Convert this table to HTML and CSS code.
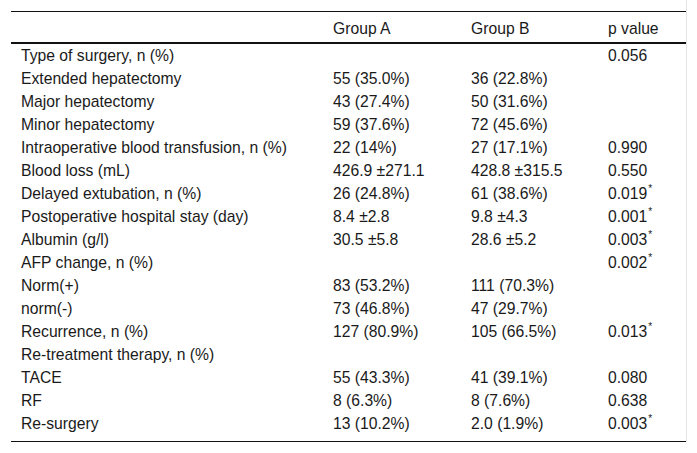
FILE: index.html
```html
<!DOCTYPE html>
<html>
<head>
<meta charset="utf-8">
<link rel="stylesheet" href="styles.css">
</head>
<body>
<div class="wrap">
<table class="data">
<colgroup>
<col class="c-label"><col class="c-a"><col class="c-b"><col class="c-p">
</colgroup>
<thead>
<tr><th></th><th>Group A</th><th>Group B</th><th>p value</th></tr>
</thead>
<tbody>
<tr><td>Type of surgery, n (%)</td><td></td><td></td><td>0.056</td></tr>
<tr><td>Extended hepatectomy</td><td>55 (35.0%)</td><td>36 (22.8%)</td><td></td></tr>
<tr><td>Major hepatectomy</td><td>43 (27.4%)</td><td>50 (31.6%)</td><td></td></tr>
<tr><td>Minor hepatectomy</td><td>59 (37.6%)</td><td>72 (45.6%)</td><td></td></tr>
<tr><td>Intraoperative blood transfusion, n (%)</td><td>22 (14%)</td><td>27 (17.1%)</td><td>0.990</td></tr>
<tr><td>Blood loss (mL)</td><td>426.9 ±271.1</td><td>428.8 ±315.5</td><td>0.550</td></tr>
<tr><td>Delayed extubation, n (%)</td><td>26 (24.8%)</td><td>61 (38.6%)</td><td>0.019<sup>*</sup></td></tr>
<tr><td>Postoperative hospital stay (day)</td><td>8.4 ±2.8</td><td>9.8 ±4.3</td><td>0.001<sup>*</sup></td></tr>
<tr><td>Albumin (g/l)</td><td>30.5 ±5.8</td><td>28.6 ±5.2</td><td>0.003<sup>*</sup></td></tr>
<tr><td>AFP change, n (%)</td><td></td><td></td><td>0.002<sup>*</sup></td></tr>
<tr><td>Norm(+)</td><td>83 (53.2%)</td><td>111 (70.3%)</td><td></td></tr>
<tr><td>norm(-)</td><td>73 (46.8%)</td><td>47 (29.7%)</td><td></td></tr>
<tr><td>Recurrence, n (%)</td><td>127 (80.9%)</td><td>105 (66.5%)</td><td>0.013<sup>*</sup></td></tr>
<tr><td>Re-treatment therapy, n (%)</td><td></td><td></td><td></td></tr>
<tr><td>TACE</td><td>55 (43.3%)</td><td>41 (39.1%)</td><td>0.080</td></tr>
<tr><td>RF</td><td>8 (6.3%)</td><td>8 (7.6%)</td><td>0.638</td></tr>
<tr class="last"><td>Re-surgery</td><td>13 (10.2%)</td><td>2.0 (1.9%)</td><td>0.003<sup>*</sup></td></tr>
</tbody>
</table>
</div>
</body>
</html>
```
FILE: styles.css
```css
html, body {
  margin: 0;
  padding: 0;
  background: #fff;
}
body {
  font-family: "Liberation Sans", Arial, sans-serif;
  font-size: 15.7px;
  color: #1a1a1a;
}
.wrap {
  width: 675px;
  padding: 11px 0 0 11px;
  border-right: 1px solid #e4e4e4;
}
.data {
  width: 675px;
  table-layout: fixed;
  border-collapse: separate;
  border-spacing: 0;
  border-top: 1px solid #111;
  border-bottom: 1px solid #111;
}
.c-label { width: 312px; }
.c-a { width: 138px; }
.c-b { width: 137px; }
.c-p { width: 88px; }
.data th {
  font-weight: normal;
  text-align: left;
  line-height: 17px;
  padding: 8px 0 5px 10px;
  border-bottom: 2px solid #111;
  white-space: nowrap;
}
.data td {
  text-align: left;
  line-height: 17px;
  padding: 3px 0 3px 10px;
  white-space: nowrap;
  vertical-align: top;
}
.data tr.last td {
  padding-bottom: 9px;
}
.data sup {
  font-size: 10px;
  line-height: 0;
  vertical-align: 7px;
  margin-left: 1px;
}
```
